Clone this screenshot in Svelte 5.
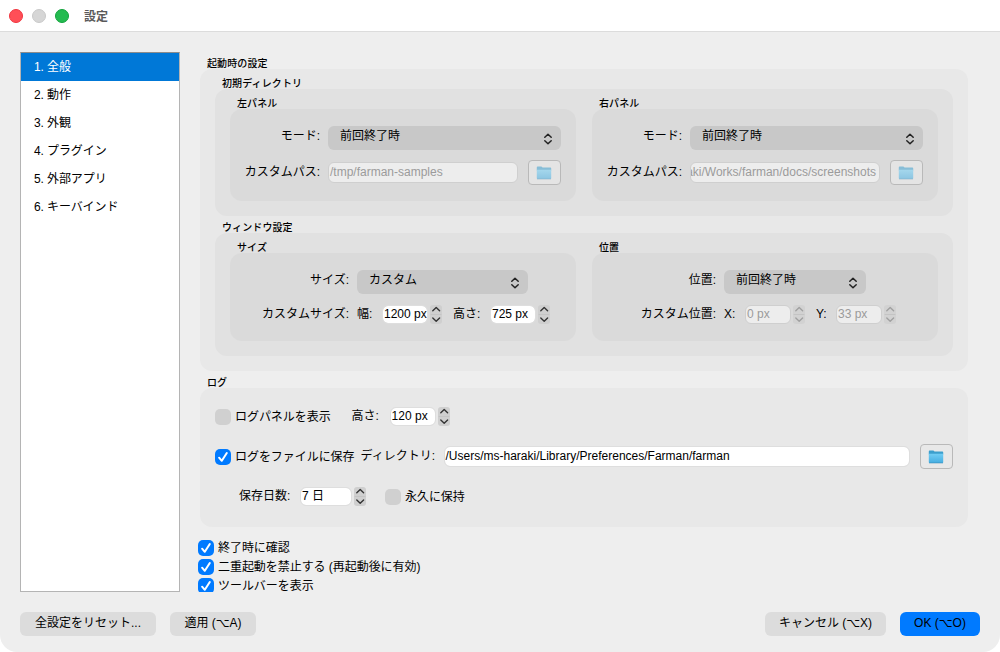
<script lang="ts">
  const pages = ['全般', '動作', '外観', 'プラグイン', '外部アプリ', 'キーバインド'];

  let current = $state(0);
  let showLog = $state(false);
  let saveLog = $state(true);
  let keepForever = $state(false);
  let confirmQuit = $state(true);
  let singleInstance = $state(true);
  let showToolbar = $state(true);
</script>

{#snippet combo(text: string, size: string)}
  <button type="button" class="combo {size}">
    <span>{text}</span>
    <svg viewBox="0 0 10 12" width="10" height="12" fill="none" stroke="currentColor" stroke-width="1.5" stroke-linecap="round" stroke-linejoin="round">
      <path d="M1.8 4.3 5 1.2l3.2 3.1M1.8 7.7 5 10.8l3.2-3.1" />
    </svg>
  </button>
{/snippet}

{#snippet spin(text: string, disabled = false, wide = false)}
  <span class="spin" class:disabled class:wide>
    <span class="field">{text}</span>
    <span class="stepper">
      <svg viewBox="0 0 12 19" width="12" height="19" fill="none" stroke="currentColor" stroke-width="1.4" stroke-linecap="round" stroke-linejoin="round">
        <path class="split" d="M1 9.5h10" />
        <path d="M2.8 5.8 6.2 2.6 9.6 5.8M2.8 13 6.2 16.2 9.6 13" />
      </svg>
    </span>
  </span>
{/snippet}

{#snippet folder(disabled = false)}
  <button type="button" class="browse" class:disabled aria-label="フォルダを選択">
    <svg viewBox="0 0 16 14" width="16" height="14">
      <defs>
        <linearGradient id="folder" x1="0" y1="0" x2="0" y2="1">
          <stop offset="0" stop-color="#72cdf4" />
          <stop offset="1" stop-color="#45ade0" />
        </linearGradient>
      </defs>
      <path d="M.8 1.4Q.8.6 1.6.6h3.8l1.2 1h7.8q.8 0 .8.8v2H.8z" fill="#3c9fcd" />
      <path d="M.8 3.8h14.4v8.4q0 .8-.8.8H1.6q-.8 0-.8-.8z" fill="url(#folder)" />
      <path d="M1 12.9h14" stroke="#3b91bd" stroke-width=".7" />
    </svg>
  </button>
{/snippet}

{#snippet check(text: string, checked: boolean, toggle: () => void)}
  <button type="button" class="check" class:checked role="checkbox" aria-checked={checked} onclick={toggle}>
    <span class="box">
      {#if checked}
        <svg viewBox="0 0 16 16" width="16" height="16" fill="none" stroke="#fff" stroke-width="2" stroke-linecap="round" stroke-linejoin="round">
          <path d="m4.1 8.7 2.7 3.1 5-7.8" />
        </svg>
      {/if}
    </span>
    <span class="text">{text}</span>
  </button>
{/snippet}

<div class="window">
  <header>
    <span class="light red"></span>
    <span class="light gray"></span>
    <span class="light green"></span>
    <h1>設定</h1>
  </header>

  <div class="body">
    <nav>
      {#each pages as page, i}
        <button type="button" class:active={i === current} onclick={() => (current = i)}>{i + 1}. {page}</button>
      {/each}
    </nav>

    <main>
      <h2>起動時の設定</h2>
      <section class="group">
        <h3>初期ディレクトリ</h3>
        <div class="sub dirs">
          <div class="col">
            <h4>左パネル</h4>
            <div class="leaf">
              <div class="row">
                <span class="label w90">モード:</span>
                {@render combo('前回終了時', 'fill')}
              </div>
              <div class="row path">
                <span class="label w90">カスタムパス:</span>
                <span class="field disabled">/tmp/farman-samples</span>
                {@render folder(true)}
              </div>
            </div>
          </div>
          <div class="col">
            <h4>右パネル</h4>
            <div class="leaf">
              <div class="row">
                <span class="label w90">モード:</span>
                {@render combo('前回終了時', 'fill')}
              </div>
              <div class="row path">
                <span class="label w90">カスタムパス:</span>
                <span class="field disabled end">aki/Works/farman/docs/screenshots</span>
                {@render folder(true)}
              </div>
            </div>
          </div>
        </div>

        <h3>ウィンドウ設定</h3>
        <div class="sub win">
          <div class="col">
            <h4>サイズ</h4>
            <div class="leaf">
              <div class="row">
                <span class="label w119">サイズ:</span>
                {@render combo('カスタム', 'mid')}
              </div>
              <div class="row nums">
                <span class="label w119">カスタムサイズ:</span>
                <span class="label w25">幅:</span>
                {@render spin('1200 px')}
                <span class="label w48">高さ:</span>
                {@render spin('725 px')}
              </div>
            </div>
          </div>
          <div class="col">
            <h4>位置</h4>
            <div class="leaf">
              <div class="row">
                <span class="label w124">位置:</span>
                {@render combo('前回終了時', 'small')}
              </div>
              <div class="row nums">
                <span class="label w124">カスタム位置:</span>
                <span class="label w21">X:</span>
                {@render spin('0 px', true)}
                <span class="label w31">Y:</span>
                {@render spin('33 px', true)}
              </div>
            </div>
          </div>
        </div>
      </section>

      <h2 class="log-title">ログ</h2>
      <section class="group log">
        <div class="row">
          {@render check('ログパネルを表示', showLog, () => (showLog = !showLog))}
          <span class="label height">高さ:</span>
          {@render spin('120 px')}
        </div>
        <div class="row">
          {@render check('ログをファイルに保存', saveLog, () => (saveLog = !saveLog))}
          <span class="label dir">ディレクトリ:</span>
          <span class="field">/Users/ms-haraki/Library/Preferences/Farman/farman</span>
          {@render folder()}
        </div>
        <div class="row">
          <span class="label days">保存日数:</span>
          {@render spin('7 日', false, true)}
          <span class="forever">
            {@render check('永久に保持', keepForever, () => (keepForever = !keepForever))}
          </span>
        </div>
      </section>

      <div class="options">
        {@render check('終了時に確認', confirmQuit, () => (confirmQuit = !confirmQuit))}
        {@render check('二重起動を禁止する (再起動後に有効)', singleInstance, () => (singleInstance = !singleInstance))}
        {@render check('ツールバーを表示', showToolbar, () => (showToolbar = !showToolbar))}
      </div>
    </main>
  </div>

  <footer>
    <button type="button" class="reset">全設定をリセット...</button>
    <button type="button" class="apply">適用 (⌥A)</button>
    <button type="button" class="cancel">キャンセル (⌥X)</button>
    <button type="button" class="ok">OK (⌥O)</button>
  </footer>
</div>

<style>
  :global(body) {
    background: #fff;
  }
  .window {
    box-sizing: border-box;
    width: 1000px;
    height: 652px;
    display: flex;
    flex-direction: column;
    overflow: hidden;
    border-radius: 0 0 17px 17px;
    background: #eee;
    color: #000;
    font: 12px/16px 'Liberation Sans', 'Noto Sans CJK JP', 'DejaVu Sans', sans-serif;
    white-space: nowrap;
  }
  .window :global(*) {
    box-sizing: border-box;
  }
  button {
    border: 0;
    padding: 0;
    background: none;
    color: inherit;
    font: inherit;
    text-align: left;
  }
  svg {
    display: block;
    flex: none;
  }
  header {
    flex: none;
    height: 32px;
    display: flex;
    align-items: center;
    padding-left: 9px;
    background: #fff;
    border-bottom: 1px solid #dcdcdc;
  }
  .light {
    width: 14px;
    height: 14px;
    margin-right: 9px;
    border-radius: 50%;
    border: 1px solid;
  }
  .red {
    background: #ff4f57;
    border-color: #f0353f;
  }
  .gray {
    background: #d6d6d6;
    border-color: #c9c9c9;
  }
  .green {
    background: #24bb50;
    border-color: #12a33c;
  }
  h1,
  h2,
  h3,
  h4 {
    margin: 0;
    font-weight: 500;
    font-size: 10px;
    line-height: 14px;
  }
  h1 {
    margin-left: 6px;
    padding-top: 2px;
    font-size: 12px;
    line-height: 16px;
    font-weight: 700;
    color: #5a5a5a;
  }
  .body {
    flex: none;
    height: 540px;
    margin-top: 20px;
    display: flex;
    padding-left: 20px;
  }
  nav {
    width: 160px;
    display: flex;
    flex-direction: column;
    border: 1px solid #b4b4b4;
    border-top-color: #8c8c8c;
    background: #fff;
  }
  nav button {
    height: 28px;
    padding: 0 0 1px 13px;
    letter-spacing: -0.1px;
  }
  nav .active {
    background: #0078d7;
    color: #fff;
  }
  main {
    width: 790px;
    padding: 3px 0 0 20px;
    overflow: hidden;
  }
  h2,
  h3,
  h4 {
    height: 14px;
    padding: 2px 0 0 7px;
    letter-spacing: 0.1px;
  }
  .group {
    width: 768px;
    height: 302px;
    padding: 6px 15px 0;
    border-radius: 12px;
    background: #e8e8e8;
  }
  .sub {
    display: flex;
    gap: 16px;
    height: 127px;
    padding: 6px 15px 0;
    margin-bottom: 3px;
    border-radius: 12px;
    background: #e1e1e1;
  }
  .win {
    height: 123px;
  }
  .col {
    width: 346px;
  }
  .leaf {
    height: 92px;
    padding: 17px 15px 0 0;
    border-radius: 12px;
    background: #dadada;
  }
  .win .leaf {
    height: 88px;
  }
  .row {
    display: flex;
    align-items: center;
    height: 24px;
  }
  .path {
    margin-top: 10px;
    height: 25px;
  }
  .nums {
    margin-top: 8px;
  }
  .label {
    flex: none;
    padding-bottom: 4px;
  }
  .path .label,
  .nums .label,
  .log .label {
    padding-bottom: 1px;
  }
  .w90,
  .w119,
  .w124 {
    text-align: right;
    margin-right: 8px;
  }
  .w90 {
    width: 90px;
  }
  .w119 {
    width: 119px;
  }
  .w124 {
    width: 124px;
  }
  .w25 {
    width: 25px;
  }
  .w48 {
    width: 48px;
    padding-left: 11px;
  }
  .w21 {
    width: 21px;
  }
  .w31 {
    width: 31px;
    padding-left: 11px;
  }
  .combo {
    display: flex;
    justify-content: space-between;
    align-items: center;
    height: 24px;
    padding: 0 8px 0 12px;
    border-radius: 6px;
    background: #c8c8c8;
  }
  .combo span {
    padding-bottom: 4px;
  }
  .combo svg {
    margin-top: 1px;
    color: #222;
  }
  .fill {
    width: 233px;
  }
  .mid {
    width: 171px;
  }
  .small {
    width: 142px;
  }
  .field {
    flex: 1;
    min-width: 0;
    height: 21px;
    display: flex;
    align-items: center;
    padding: 0 3px 1px 1px;
    overflow: hidden;
    border: 1px solid #dedede;
    border-radius: 6px;
    background: #fff;
    background-clip: padding-box;
  }
  .field.disabled,
  .disabled .field {
    border-color: #cfcfcf;
    background: #ededed;
    color: #9b9b9b;
  }
  .end {
    justify-content: flex-end;
  }
  .browse {
    flex: none;
    width: 33px;
    height: 25px;
    margin-left: 10px;
    display: grid;
    place-items: center;
    padding-right: 1px;
    border: 1px solid #b9b9b9;
    border-radius: 4px;
    background: #e8e8e8;
  }
  .browse.disabled {
    background: #e4e4e4;
  }
  .browse.disabled svg {
    opacity: 0.55;
  }
  .spin {
    display: flex;
    align-items: center;
    gap: 2px;
    width: 60px;
    color: #000;
  }
  .spin.wide {
    width: 66px;
  }
  .spin .field {
    height: 19px;
    padding: 0 1px 1px;
  }
  .stepper {
    width: 12px;
    height: 19px;
    border-radius: 3px;
    background: #cfcfcf;
    color: #333;
  }
  .split {
    stroke: #c4c4c4;
    stroke-width: 1;
  }
  .spin.disabled .stepper {
    background: #d2d2d2;
    color: #a0a0a0;
  }
  .log-title {
    margin-top: 3px;
  }
  .log {
    height: 139px;
    padding-top: 16px;
  }
  .log .row {
    height: 25px;
    margin-bottom: 15px;
  }
  .check {
    flex: none;
    display: flex;
    align-items: center;
    height: 19px;
    letter-spacing: -0.05px;
  }
  .box {
    flex: none;
    width: 16px;
    height: 16px;
    margin-right: 4px;
    border-radius: 5px;
    background: #d0d0d0;
  }
  .checked .box {
    background: #007aff;
  }
  .text {
    padding-top: 1px;
  }
  .height {
    width: 59px;
    padding-left: 21px;
  }
  .dir {
    width: 89px;
    padding-left: 6px;
  }
  .days {
    width: 85px;
    padding-left: 24px;
  }
  .forever {
    margin-left: 19px;
  }
  .options {
    margin: 11px 0 0 -2px;
    display: flex;
    flex-direction: column;
    align-items: flex-start;
  }
  footer {
    display: flex;
    gap: 14px;
    padding: 20px 20px 0;
  }
  footer button {
    height: 24px;
    padding-bottom: 2px;
    border-radius: 6px;
    background: #dcdcdc;
    text-align: center;
  }
  .reset {
    width: 136px;
  }
  .apply {
    width: 86px;
  }
  .cancel {
    width: 121px;
    margin-left: auto;
  }
  .ok {
    width: 80px;
    background: #007aff;
  }
</style>
